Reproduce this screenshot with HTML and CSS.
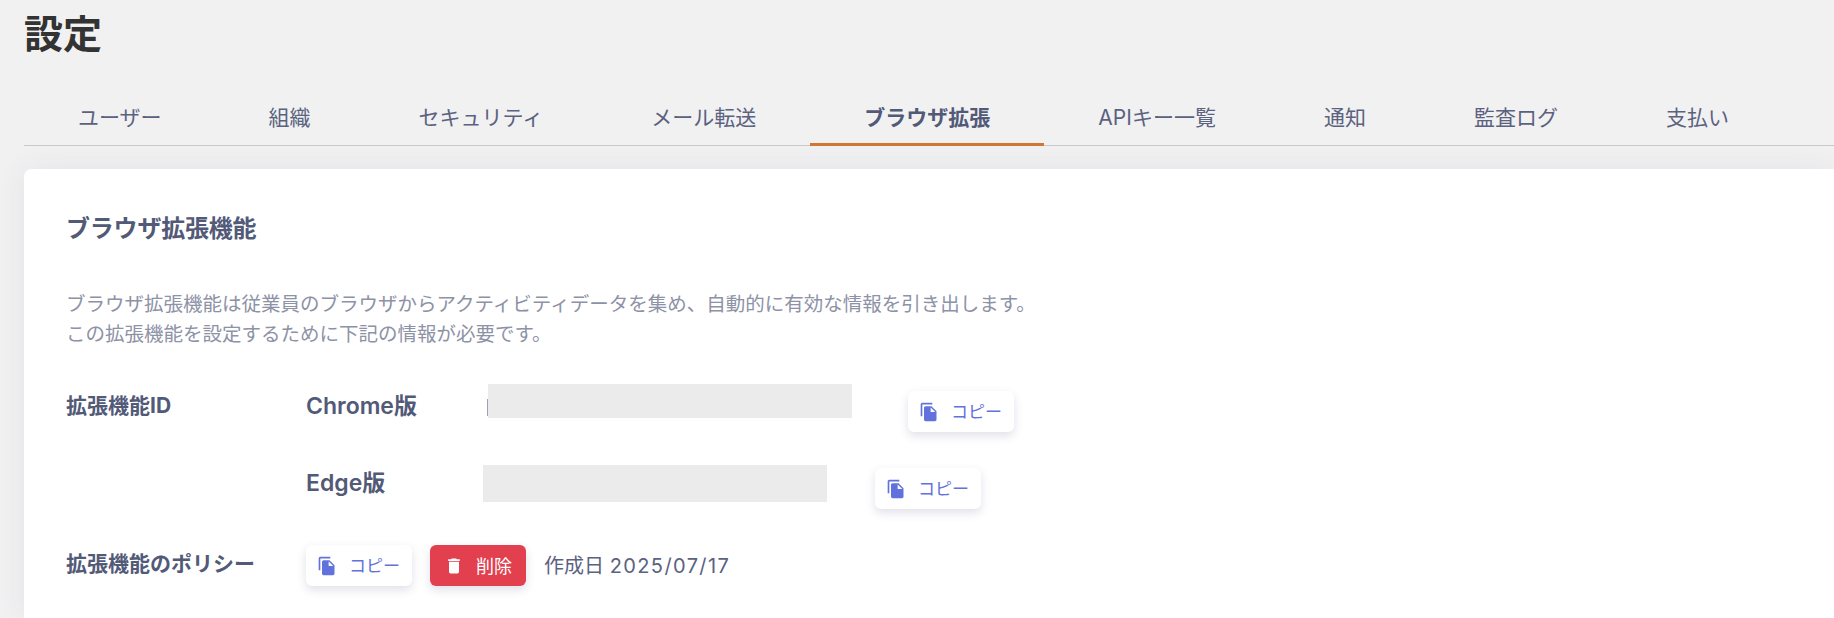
FILE: index.html
```html
<!DOCTYPE html>
<html lang="ja">
<head>
<meta charset="utf-8">
<title>設定</title>
<link rel="stylesheet" href="styles.css">
</head>
<body>
<main class="page">
  <h1 class="page-title">設定</h1>
  <nav class="tabs">
    <a class="tab">ユーザー</a>
    <a class="tab">組織</a>
    <a class="tab">セキュリティ</a>
    <a class="tab">メール転送</a>
    <a class="tab active">ブラウザ拡張</a>
    <a class="tab">APIキー一覧</a>
    <a class="tab">通知</a>
    <a class="tab">監査ログ</a>
    <a class="tab">支払い</a>
  </nav>
  <section class="card">
    <h2 class="card-title">ブラウザ拡張機能</h2>
    <p class="desc">ブラウザ拡張機能は従業員のブラウザからアクティビティデータを集め、自動的に有効な情報を引き出します。<br>この拡張機能を設定するために下記の情報が必要です。</p>
    <div class="row row-chrome">
      <div class="label">拡張機能ID</div>
      <div class="sublabel">Chrome版</div>
      <span class="caret"></span>
      <div class="mask mask-chrome"></div>
      <button class="btn btn-copy btn-chrome">
        <svg class="icon" viewBox="0 0 24 24"><path d="M16 1H4c-1.1 0-2 .9-2 2v14h2V3h12V1zm-1 4l6 6v10c0 1.1-.9 2-2 2H7.99C6.89 23 6 22.1 6 21l.01-14c0-1.1.89-2 1.99-2h7zm-1 7h5.5L14 6.5V12z"/></svg>
        <span class="btn-text">コピー</span>
      </button>
    </div>
    <div class="row row-edge">
      <div class="label"></div>
      <div class="sublabel sublabel-edge">Edge版</div>
      <div class="mask mask-edge"></div>
      <button class="btn btn-copy btn-edge">
        <svg class="icon" viewBox="0 0 24 24"><path d="M16 1H4c-1.1 0-2 .9-2 2v14h2V3h12V1zm-1 4l6 6v10c0 1.1-.9 2-2 2H7.99C6.89 23 6 22.1 6 21l.01-14c0-1.1.89-2 1.99-2h7zm-1 7h5.5L14 6.5V12z"/></svg>
        <span class="btn-text">コピー</span>
      </button>
    </div>
    <div class="row row-policy">
      <div class="label">拡張機能のポリシー</div>
      <button class="btn btn-copy">
        <svg class="icon" viewBox="0 0 24 24"><path d="M16 1H4c-1.1 0-2 .9-2 2v14h2V3h12V1zm-1 4l6 6v10c0 1.1-.9 2-2 2H7.99C6.89 23 6 22.1 6 21l.01-14c0-1.1.89-2 1.99-2h7zm-1 7h5.5L14 6.5V12z"/></svg>
        <span class="btn-text">コピー</span>
      </button>
      <button class="btn btn-danger">
        <svg class="icon" viewBox="0 0 24 24"><path d="M6 19c0 1.1.9 2 2 2h8c1.1 0 2-.9 2-2V7H6v12zM19 4h-3.5l-1-1h-5l-1 1H5v2h14V4z"/></svg>
        <span class="btn-text">削除</span>
      </button>
      <span class="created">作成日 <span class="created-date">2025/07/17</span></span>
    </div>
  </section>
</main>
</body>
</html>
```

FILE: styles.css
```css
* { box-sizing: border-box; }

html, body {
  margin: 0;
  height: 618px;
  overflow: hidden;
}

body {
  background: #f1f1f2;
  font-family: Inter, "Noto Sans CJK JP", sans-serif;
  color: #525a78;
}

.page {
  padding-left: 24px;
}

.page-title {
  margin: 0;
  height: 78px;
  padding-top: 10px;
  font-size: 39px;
  line-height: 48px;
  font-weight: 700;
  color: #333333;
}

.tabs {
  display: flex;
  height: 68px;
  border-bottom: 1px solid #c9c9c9;
}

.tab {
  position: relative;
  padding: 25px 54px 0;
  font-size: 21px;
  line-height: 30px;
  color: #5b627f;
  white-space: nowrap;
}

.tab:first-child {
  padding-right: 53px;
}

.tab.active {
  font-weight: 700;
  color: #525a78;
}

.tab.active::after {
  content: "";
  position: absolute;
  left: 0;
  right: 0;
  bottom: -1px;
  height: 3px;
  background: #d27636;
}

.card {
  margin-top: 23px;
  height: 449px;
  padding: 44px 0 0 42px;
  background: #ffffff;
  border-radius: 8px 0 0 0;
  box-shadow: 0 0 30px rgba(50, 60, 90, 0.07);
}

.card-title {
  margin: 0;
  font-size: 24px;
  letter-spacing: -0.2px;
  line-height: 32px;
  font-weight: 700;
  color: #525a78;
}

.desc {
  margin: 44px 0 0;
  font-size: 19.5px;
  line-height: 30px;
  color: #8d92a6;
}

.row {
  display: flex;
  align-items: flex-start;
}

.row-chrome { margin-top: 35px; height: 81px; }
.row-edge { height: 80px; }
.row-policy { align-items: center; height: 41px; }

.label {
  width: 240px;
  flex: none;
  font-size: 21px;
  line-height: 30px;
  font-weight: 700;
  color: #525a78;
}

.row-policy .label { margin-bottom: 3px; }

.row-chrome .label,
.row-chrome .sublabel { margin-top: 7px; }

.sublabel {
  width: 181px;
  flex: none;
  font-size: 23px;
  line-height: 30px;
  font-weight: 600;
  color: #525a78;
}

.sublabel-edge {
  width: 177px;
  margin-top: 3px;
}

.caret {
  width: 1px;
  height: 17px;
  margin-top: 15px;
  background: #9da1bb;
}

.mask {
  background: #ebebeb;
  flex: none;
}

.mask-chrome { width: 364px; height: 34px; }
.mask-edge { width: 344px; height: 37px; }

.btn {
  display: flex;
  align-items: center;
  flex: none;
  height: 41px;
  padding: 0 0 0 11px;
  gap: 12px;
  border: 0;
  border-radius: 6px;
  font-family: inherit;
  font-size: 17px;
  white-space: nowrap;
  box-shadow: 0 4px 10px rgba(60, 70, 120, 0.16);
}

.btn-text {
  margin-bottom: 2px;
}

.icon {
  width: 20px;
  height: 20px;
  fill: currentColor;
  flex: none;
}

.btn-copy {
  width: 106px;
  background: #ffffff;
  color: #6272dc;
}

.btn-chrome { margin: 7px 0 0 56px; }
.btn-edge { margin: 3px 0 0 48px; }

.btn-danger {
  width: 96px;
  margin-left: 18px;
  padding-left: 14px;
  gap: 12px;
  font-size: 18px;
  background: #e2404e;
  color: #ffffff;
}

.created {
  margin-left: 18px;
  margin-bottom: 2px;
  font-size: 20px;
  color: #5b627f;
}

.created-date {
  letter-spacing: 1.4px;
}
```
